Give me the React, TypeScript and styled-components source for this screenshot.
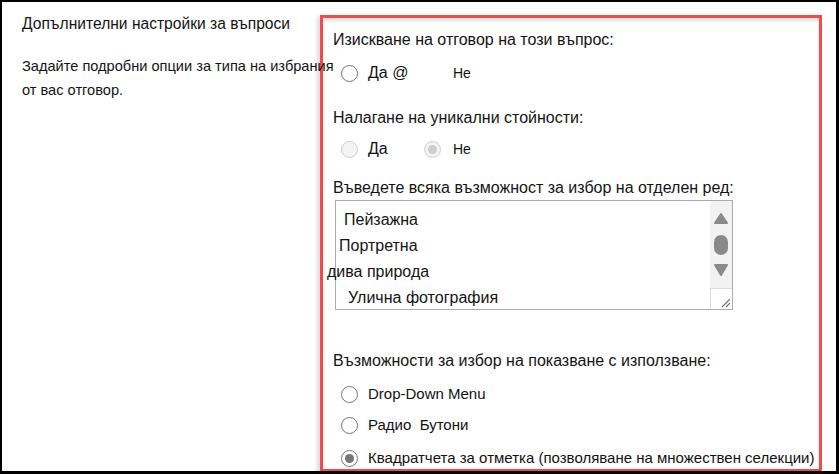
import styled, { createGlobalStyle } from "styled-components";

const GlobalStyle = createGlobalStyle`
  html, body {
    margin: 0;
    padding: 0;
    background: #ffffff;
  }
  body {
    font-family: "Liberation Sans", Arial, sans-serif;
    color: #141414;
  }
`;

const Frame = styled.div`
  box-sizing: border-box;
  width: 839px;
  height: 474px;
  border-style: solid;
  border-color: #000;
  border-width: 2px 3px 3px 2px;
  background: #fff;
  padding-top: 13px;
  display: grid;
  grid-template-columns: 318px 502px;
  overflow: hidden;
`;

const InfoColumn = styled.div`
  padding-left: 20px;
  position: relative;
  z-index: 1;
`;

const Heading = styled.div`
  font-size: 15.6px;
  line-height: 18px;
  white-space: nowrap;
`;

const Description = styled.p`
  margin: 21px 0 0;
  font-size: 14.6px;
  line-height: 24px;
  white-space: nowrap;
`;

const Panel = styled.div`
  box-sizing: border-box;
  border: 3px solid #f24b4b;
  padding: 12px 0 0 10px;
  display: flex;
  flex-direction: column;
  box-shadow: -3px 2px 4px rgba(0, 0, 0, 0.14), inset 0 3px 3px rgba(0, 0, 0, 0.12);
`;

const FieldLabel = styled.div<{ $top?: number }>`
  margin-top: ${(p) => p.$top ?? 0}px;
  font-size: 16px;
  line-height: 20px;
  white-space: nowrap;
`;

const ChoiceRow = styled.div<{ $top: number }>`
  display: flex;
  align-items: center;
  height: 22px;
  margin-top: ${(p) => p.$top}px;
  padding-left: 8px;
`;

const Choice = styled.label<{ $width?: number; $gap?: number }>`
  display: flex;
  align-items: center;
  gap: ${(p) => p.$gap ?? 10}px;
  width: ${(p) => (p.$width ? `${p.$width}px` : "auto")};
  flex-shrink: 0;
  white-space: nowrap;
`;

const Radio = styled.span<{ $checked?: boolean; $disabled?: boolean; $hidden?: boolean }>`
  box-sizing: border-box;
  width: 17px;
  height: 17px;
  border-radius: 50%;
  flex-shrink: 0;
  visibility: ${(p) => (p.$hidden ? "hidden" : "visible")};
  border: 1.7px solid ${(p) => (p.$disabled ? "#cfcfcf" : "#767676")};
  background: ${(p) => (p.$disabled ? "#f3f3f3" : "#fff")};
  display: flex;
  align-items: center;
  justify-content: center;
  &::after {
    content: "";
    display: ${(p) => (p.$checked ? "block" : "none")};
    width: 9px;
    height: 9px;
    border-radius: 50%;
    background: ${(p) => (p.$disabled ? "#cdcdcd" : "#767676")};
  }
`;

const ChoiceText = styled.span<{ $size?: number }>`
  font-size: ${(p) => p.$size ?? 15}px;
  line-height: 20px;
  color: #111;
`;

const TextBox = styled.div`
  box-sizing: border-box;
  margin: 2px 0 0 2px;
  width: 398px;
  height: 110px;
  border: 1px solid #ababab;
  display: flex;
`;

const Lines = styled.div`
  flex: 1;
  padding-top: 6px;
`;

const Line = styled.div<{ $indent: number }>`
  font-size: 16px;
  line-height: 26px;
  margin-left: ${(p) => p.$indent}px;
  white-space: nowrap;
`;

const ScrollBar = styled.div`
  width: 22px;
  background: #f2f2f2;
  display: flex;
  flex-direction: column;
`;

const ResizeCorner = styled.div`
  box-sizing: border-box;
  margin-top: auto;
  height: 21px;
  background: #fff;
  border-top: 1px solid #dcdcdc;
  border-left: 1px solid #dcdcdc;
  display: flex;
  align-items: flex-end;
  justify-content: flex-end;
`;

const options = [
  { text: "Пейзажна", indent: 8 },
  { text: "Портретна", indent: 3 },
  { text: "дива природа", indent: -9 },
  { text: "Улична фотография", indent: 12 },
];

export default function App() {
  return (
    <>
      <GlobalStyle />
      <Frame>
        <InfoColumn>
          <Heading>Допълнителни настройки за въпроси</Heading>
          <Description>
            Задайте подробни опции за типа на избрания
            <br />
            от вас отговор.
          </Description>
        </InfoColumn>

        <Panel>
          <FieldLabel>Изискване на отговор на този въпрос:</FieldLabel>
          <ChoiceRow $top={12}>
            <Choice $width={83}>
              <Radio />
              <ChoiceText $size={16}>Да @</ChoiceText>
            </Choice>
            <Choice $gap={12}>
              <Radio $hidden />
              <ChoiceText $size={14}>Не</ChoiceText>
            </Choice>
          </ChoiceRow>

          <FieldLabel $top={24}>Налагане на уникални стойности:</FieldLabel>
          <ChoiceRow $top={10}>
            <Choice $width={83}>
              <Radio $disabled />
              <ChoiceText $size={16}>Да</ChoiceText>
            </Choice>
            <Choice $gap={12}>
              <Radio $disabled $checked />
              <ChoiceText $size={14}>Не</ChoiceText>
            </Choice>
          </ChoiceRow>

          <FieldLabel $top={18}>Въведете всяка възможност за избор на отделен ред:</FieldLabel>
          <TextBox>
            <Lines>
              {options.map((o) => (
                <Line key={o.text} $indent={o.indent}>
                  {o.text}
                </Line>
              ))}
            </Lines>
            <ScrollBar>
              <svg width="22" height="86" viewBox="0 0 22 86">
                <path d="M5 22 L17 22 L11 13 Z" fill="#8a8a8a" stroke="#8a8a8a" strokeWidth="2" strokeLinejoin="round" />
                <rect x="4" y="34" width="14" height="20" rx="7" fill="#8a8a8a" />
                <path d="M5 64 L17 64 L11 74 Z" fill="#8a8a8a" stroke="#8a8a8a" strokeWidth="2" strokeLinejoin="round" />
              </svg>
              <ResizeCorner>
                <svg width="14" height="14" viewBox="0 0 14 14">
                  <path d="M12 4 L4 12 M12 8 L8 12" stroke="#777" strokeWidth="1.2" />
                </svg>
              </ResizeCorner>
            </ScrollBar>
          </TextBox>

          <FieldLabel $top={41}>Възможности за избор на показване с използване:</FieldLabel>
          <ChoiceRow $top={12}>
            <Choice>
              <Radio />
              <ChoiceText>Drop-Down Menu</ChoiceText>
            </Choice>
          </ChoiceRow>
          <ChoiceRow $top={9}>
            <Choice>
              <Radio />
              <ChoiceText>Радио&nbsp; Бутони</ChoiceText>
            </Choice>
          </ChoiceRow>
          <ChoiceRow $top={11}>
            <Choice>
              <Radio $checked />
              <ChoiceText>Квадратчета за отметка (позволяване на множествен селекции)</ChoiceText>
            </Choice>
          </ChoiceRow>
        </Panel>
      </Frame>
    </>
  );
}
